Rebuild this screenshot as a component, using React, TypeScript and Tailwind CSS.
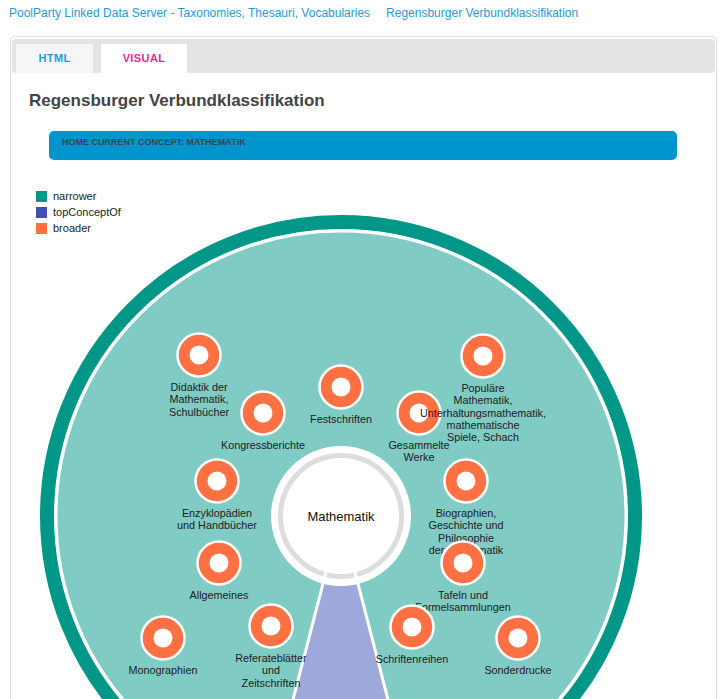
import React from 'react'

interface ConceptNode {
  x: number
  y: number
  label: string[]
}

// narrower concepts around the current one, in paint order
const nodes: ConceptNode[] = [
  { x: 199, y: 355, label: ['Didaktik der', 'Mathematik,', 'Schulbücher'] },
  { x: 263, y: 413, label: ['Kongressberichte'] },
  { x: 341, y: 387, label: ['Festschriften'] },
  { x: 419, y: 413, label: ['Gesammelte', 'Werke'] },
  {
    x: 483,
    y: 356,
    label: ['Populäre', 'Mathematik,', 'Unterhaltungsmathematik,', 'mathematische', 'Spiele, Schach'],
  },
  { x: 217, y: 481, label: ['Enzyklopädien', 'und Handbücher'] },
  { x: 466, y: 481, label: ['Biographien,', 'Geschichte und', 'Philosophie', 'der Mathematik'] },
  { x: 219, y: 563, label: ['Allgemeines'] },
  { x: 463, y: 563, label: ['Tafeln und', 'Formelsammlungen'] },
  { x: 163, y: 638, label: ['Monographien'] },
  { x: 271, y: 626, label: ['Referateblätter', 'und', 'Zeitschriften'] },
  { x: 412, y: 627, label: ['Schriftenreihen'] },
  { x: 518, y: 638, label: ['Sonderdrucke'] },
]

const legend = [
  { color: 'bg-[#009688]', label: 'narrower' },
  { color: 'bg-[#3f51b5]', label: 'topConceptOf' },
  { color: 'bg-[#ff7043]', label: 'broader' },
]

const CX = 341
const CY = 516

const ConceptWheel = () => {
  const sin = 0.2504
  const cos = 0.9681
  return (
    <svg className="block" width={702} height={540} viewBox="12 160 702 540">
      {/* outer ring + fill */}
      <circle cx={CX} cy={CY} r={294} fill="none" stroke="#009688" strokeWidth={14} />
      <circle cx={CX} cy={CY} r={285} fill="#80cbc4" stroke="#ffffff" strokeWidth={3} />

      {/* topConceptOf wedge */}
      <path
        d={`M${CX - 0.5} ${CY} L${CX - 0.5 - 400 * sin} ${CY + 400 * cos} L${CX - 0.5 + 400 * sin} ${CY + 400 * cos} Z`}
        fill="#9fa8da"
        stroke="#ffffff"
        strokeWidth={3}
      />

      {/* current concept */}
      <circle cx={CX} cy={CY} r={70} fill="#ffffff" />
      <circle cx={CX} cy={CY} r={60.5} fill="none" stroke="#dddddd" strokeWidth={5} />
      <line
        x1={CX - 0.5 - 56 * sin}
        y1={CY + 56 * cos}
        x2={CX - 0.5 - 71 * sin}
        y2={CY + 71 * cos}
        stroke="#ffffff"
        strokeWidth={3}
      />
      <line
        x1={CX - 0.5 + 56 * sin}
        y1={CY + 56 * cos}
        x2={CX - 0.5 + 71 * sin}
        y2={CY + 71 * cos}
        stroke="#ffffff"
        strokeWidth={3}
      />
      <text x={CX} y={CY + 5} textAnchor="middle" fontSize={13} fill="#111111">
        Mathematik
      </text>

      {nodes.map((node, index) => (
        <g key={index}>
          <circle cx={node.x} cy={node.y} r={21.5} fill="#ff7043" stroke="#ffffff" strokeWidth={2.5} />
          <circle cx={node.x} cy={node.y} r={9.5} fill="#ffffff" />
          <text textAnchor="middle" fontSize={10.8} fill="#1c1c1c">
            {node.label.map((line, i) => (
              <tspan key={i} x={node.x} y={node.y + 36 + i * 12.3}>
                {line}
              </tspan>
            ))}
          </text>
        </g>
      ))}
    </svg>
  )
}

const App = () => {
  return (
    <div className="h-[699px] overflow-hidden bg-white font-['Liberation_Sans',Arial,sans-serif]">
      {/* Top links */}
      <div className="flex gap-4 px-[9px] pt-[6px] text-[12px] leading-[14px] text-[#1e9bd7]">
        <a href="#">PoolParty Linked Data Server - Taxonomies, Thesauri, Vocabularies</a>
        <a href="#">Regensburger Verbundklassifikation</a>
      </div>

      {/* Panel */}
      <div className="ml-[10px] mr-[11px] mt-4 rounded-t-[4px] border border-[#dddddd] px-px pt-[2px]">
        {/* Tabs */}
        <div className="flex h-[34px] items-end gap-2 rounded-[4px] bg-[#e4e4e4] pl-1">
          <div className="flex h-[29px] w-[77px] items-center justify-center bg-[#f6f6f6] text-[11px] font-bold tracking-[0.4px] text-[#1e9bd7]">
            HTML
          </div>
          <div className="flex h-[29px] w-[86px] items-center justify-center bg-white text-[11px] font-bold tracking-[0.4px] text-[#ec2a9c]">
            VISUAL
          </div>
        </div>

        {/* Heading */}
        <h1 className="mt-[18px] pl-[17px] text-[17px] font-bold leading-[20px] text-[#444444]">
          Regensburger Verbundklassifikation
        </h1>

        {/* Breadcrumb */}
        <div className="ml-[37px] mr-[38px] mt-[20px] h-[29px] rounded-[5px] bg-[#0094cc] pl-[13px] pt-[6px] text-[9px] font-bold leading-[11px] text-[#37474f]">
          HOME CURRENT CONCEPT: MATHEMATIK
        </div>

        {/* Visual */}
        <div className="relative">
          <ConceptWheel />
          <div className="absolute left-[24px] top-[28px] flex flex-col">
            {legend.map((item) => (
              <div key={item.label} className="flex h-4 items-center gap-[6px] text-[11px] text-[#222222]">
                <span className={`h-[11px] w-[11px] ${item.color}`} />
                <span>{item.label}</span>
              </div>
            ))}
          </div>
        </div>
      </div>
    </div>
  )
}

export default App
